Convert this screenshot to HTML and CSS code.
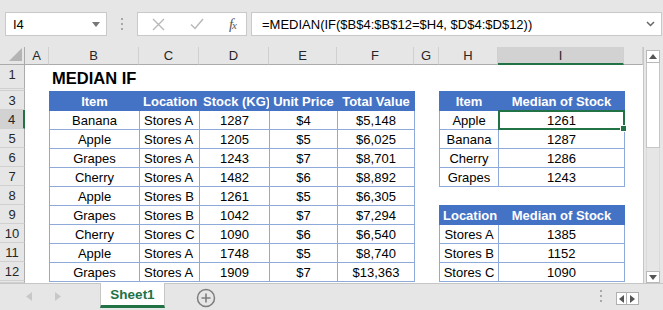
FILE: index.html
```html
<!DOCTYPE html>
<html lang="en">
<head>
    <meta charset="UTF-8">
    <meta name="viewport" content="width=device-width, initial-scale=1.0">
    <title>MEDIAN IF</title>
    <link rel="stylesheet" href="styles.css">
</head>
<body>
<div class="app">

    <!-- name box + formula bar -->
    <div class="formula-row">
        <div class="namebox">
            <span>I4</span>
            <svg class="caret" width="8" height="5" viewBox="0 0 8 5"><path d="M0 0h8L4 5z" fill="#777"/></svg>
        </div>
        <div class="grip"><i></i><i></i><i></i></div>
        <div class="fx-box">
            <svg width="13" height="13" viewBox="0 0 13 13"><path d="M1 1L12 12M12 1L1 12" stroke="#b8b8b8" stroke-width="1.4" fill="none"/></svg>
            <svg width="14" height="12" viewBox="0 0 14 12"><path d="M1 6.5L5 10.5L13 1" stroke="#b8b8b8" stroke-width="1.5" fill="none"/></svg>
            <span class="fx">f<small>x</small></span>
        </div>
        <div class="formula">
            <span>=MEDIAN(IF($B$4:$B$12=$H4, $D$4:$D$12))</span>
            <svg width="9" height="6" viewBox="0 0 9 6"><path d="M1 1L4.5 4.5L8 1" stroke="#666" stroke-width="1.5" fill="none"/></svg>
        </div>
    </div>

    <div class="workarea">
        <div class="sheet">
            <div class="corner"><svg width="13" height="13" viewBox="0 0 13 13"><path d="M13 0V13H0z" fill="#b4b4b4"/></svg></div>
            <div class="ch">A</div>
            <div class="ch">B</div>
            <div class="ch">C</div>
            <div class="ch">D</div>
            <div class="ch">E</div>
            <div class="ch">F</div>
            <div class="ch">G</div>
            <div class="ch">H</div>
            <div class="ch sel">I</div>
            <div class="ch"></div>

            <div class="rh">1</div>
            <div class="rh small"></div>
            <div class="rh">3</div>
            <div class="rh sel">4</div>
            <div class="rh">5</div>
            <div class="rh">6</div>
            <div class="rh">7</div>
            <div class="rh">8</div>
            <div class="rh">9</div>
            <div class="rh">10</div>
            <div class="rh">11</div>
            <div class="rh">12</div>
            <div class="rh small"></div>

            <div class="title">MEDIAN IF</div>

            <table class="xl stock">
                <colgroup><col style="width:90px"><col style="width:60px"><col style="width:70px"><col style="width:68px"><col style="width:77px"></colgroup>
                <tr><th>Item</th><th>Location</th><th>Stock (KG)</th><th>Unit Price</th><th>Total Value</th></tr>
                <tr><td>Banana</td><td class="l">Stores A</td><td>1287</td><td>$4</td><td>$5,148</td></tr>
                <tr><td>Apple</td><td class="l">Stores A</td><td>1205</td><td>$5</td><td>$6,025</td></tr>
                <tr><td>Grapes</td><td class="l">Stores A</td><td>1243</td><td>$7</td><td>$8,701</td></tr>
                <tr><td>Cherry</td><td class="l">Stores A</td><td>1482</td><td>$6</td><td>$8,892</td></tr>
                <tr><td>Apple</td><td class="l">Stores B</td><td>1261</td><td>$5</td><td>$6,305</td></tr>
                <tr><td>Grapes</td><td class="l">Stores B</td><td>1042</td><td>$7</td><td>$7,294</td></tr>
                <tr><td>Cherry</td><td class="l">Stores C</td><td>1090</td><td>$6</td><td>$6,540</td></tr>
                <tr><td>Apple</td><td class="l">Stores A</td><td>1748</td><td>$5</td><td>$8,740</td></tr>
                <tr><td>Grapes</td><td class="l">Stores A</td><td>1909</td><td>$7</td><td>$13,363</td></tr>
            </table>

            <table class="xl by-item">
                <colgroup><col style="width:59px"><col style="width:126px"></colgroup>
                <tr><th>Item</th><th>Median of Stock</th></tr>
                <tr><td>Apple</td><td class="active">1261</td></tr>
                <tr><td>Banana</td><td>1287</td></tr>
                <tr><td>Cherry</td><td>1286</td></tr>
                <tr><td>Grapes</td><td>1243</td></tr>
            </table>

            <table class="xl by-location">
                <colgroup><col style="width:59px"><col style="width:126px"></colgroup>
                <tr><th>Location</th><th>Median of Stock</th></tr>
                <tr><td>Stores A</td><td>1385</td></tr>
                <tr><td>Stores B</td><td>1152</td></tr>
                <tr><td>Stores C</td><td>1090</td></tr>
            </table>
        </div>

        <div class="vscroll">
            <div class="vbtn"><svg width="8" height="5" viewBox="0 0 8 5"><path d="M0 5h8L4 0z" fill="#555"/></svg></div>
            <div class="thumb"></div>
            <div class="track"></div>
            <div class="vbtn down"><svg width="8" height="5" viewBox="0 0 8 5"><path d="M0 0h8L4 5z" fill="#555"/></svg></div>
        </div>
    </div>

    <div class="tabbar">
        <div class="tabnav">
            <svg width="6" height="9" viewBox="0 0 6 9"><path d="M6 0V9L0 4.5z" fill="#c8c8c8"/></svg>
            <svg width="6" height="9" viewBox="0 0 6 9"><path d="M0 0V9L6 4.5z" fill="#c8c8c8"/></svg>
        </div>
        <div class="tab">Sheet1</div>
        <div class="addsheet">
            <svg width="20" height="20" viewBox="0 0 20 20"><circle cx="10" cy="10" r="8.5" stroke="#7d7d7d" stroke-width="1.5" fill="none"/><path d="M10 5.5v9M5.5 10h9" stroke="#7d7d7d" stroke-width="1.6"/></svg>
        </div>
        <div class="spacer"></div>
        <div class="grip low"><i></i><i></i><i></i></div>
        <div class="hnav">
            <span><svg width="5" height="8" viewBox="0 0 5 8"><path d="M5 0V8L0 4z" fill="#555"/></svg></span>
            <span><svg width="5" height="8" viewBox="0 0 5 8"><path d="M0 0V8L5 4z" fill="#555"/></svg></span>
        </div>
    </div>

</div>
</body>
</html>
```

FILE: styles.css
```css
body {
    margin: 0;
    font-family: "Liberation Sans", Arial, sans-serif;
    font-size: 13px;
    color: #000;
    background: #e6e6e6;
}
.app {
    width: 663px;
    height: 310px;
    overflow: hidden;
    display: flex;
    flex-direction: column;
    background: #e6e6e6;
}

/* formula bar */
.formula-row {
    height: 47px;
    flex: none;
    display: flex;
    align-items: flex-start;
    padding: 12px 1px 0 5px;
    box-sizing: border-box;
}
.namebox,
.fx-box,
.formula {
    height: 24px;
    box-sizing: border-box;
    background: #fff;
    border: 1px solid #c9c9c9;
    display: flex;
    align-items: center;
}
.namebox {
    width: 102px;
    padding: 0 6px 0 7px;
    justify-content: space-between;
}
.grip {
    width: 2px;
    margin: 6px 14px 0 14px;
    display: flex;
    flex-direction: column;
    gap: 3px;
}
.grip i {
    display: block;
    width: 2px;
    height: 2px;
    background: #a8a8a8;
}
.fx-box {
    width: 110px;
    padding: 0 10px 0 14px;
    justify-content: space-between;
}
.fx {
    font-family: "Liberation Serif", "Times New Roman", serif;
    font-style: italic;
    font-size: 15px;
    color: #5a5a5a;
    letter-spacing: -1px;
}
.fx small {
    font-size: 11px;
}
.formula {
    flex: 1;
    margin-left: 4px;
    padding: 0 6px 0 10px;
    justify-content: space-between;
}

/* sheet */
.workarea {
    height: 236px;
    flex: none;
    display: flex;
}
.sheet {
    width: 644px;
    box-sizing: border-box;
    border-right: 1px solid #c6c6c6;
    background: #fff;
    display: grid;
    grid-template-columns: 25px 24px 90px 60px 70px 68px 77px 25px 59px 126px 1fr;
    grid-template-rows: 18px 24px 2px repeat(10, 19px) 1fr;
    overflow: hidden;
}
.corner {
    background: #e6e6e6;
    border-right: 1px solid #ababab;
    border-bottom: 1px solid #ababab;
    display: flex;
    align-items: flex-end;
    justify-content: flex-end;
    padding: 0 2px 3px 0;
}
.ch {
    background: #e6e6e6;
    border-right: 1px solid #d0d0d0;
    border-bottom: 1px solid #ababab;
    text-align: center;
    line-height: 17px;
    color: #262626;
}
.ch.sel {
    background: #d2d2d2;
    border-bottom: 2px solid #217346;
}
.rh {
    grid-column: 1;
    background: #e6e6e6;
    border-right: 1px solid #ababab;
    border-bottom: 1px solid #d0d0d0;
    text-align: center;
    line-height: 19px;
    color: #262626;
    overflow: hidden;
}
.rh:first-of-type {
    line-height: 24px;
}
.rh.sel {
    background: #d2d2d2;
    border-right: 2px solid #217346;
}
.title {
    grid-column: 3 / 8;
    grid-row: 2;
    align-self: end;
    padding-left: 3px;
    font-size: 16.5px;
    font-weight: bold;
    line-height: 22px;
}

/* tables */
.xl {
    border-collapse: collapse;
    table-layout: fixed;
    width: 100%;
    align-self: start;
}
.stock {
    grid-column: 3 / 8;
    grid-row: 4 / 14;
}
.by-item {
    grid-column: 9 / 11;
    grid-row: 4 / 9;
}
.by-location {
    grid-column: 9 / 11;
    grid-row: 10 / 14;
}
.xl tr {
    height: 19px;
}
.xl th,
.xl td {
    padding: 0 3px;
    line-height: 17px;
    white-space: nowrap;
    overflow: hidden;
    text-align: center;
}
.xl th {
    background: #4472c4;
    color: #fff;
    font-weight: bold;
    border: 1px solid #4472c4;
}
.stock th + th {
    border-left-color: #8eaadb;
}
.xl td {
    border: 1px solid #8eaadb;
}
.xl td.l {
    text-align: left;
    padding-left: 4px;
}
.xl td.active {
    position: relative;
    overflow: visible;
}
.xl td.active::after {
    content: "";
    position: absolute;
    left: -1px;
    top: -1px;
    right: -1px;
    bottom: -1px;
    border: 2px solid #217346;
}
.xl td.active::before {
    content: "";
    position: absolute;
    right: -3px;
    bottom: -3px;
    width: 5px;
    height: 5px;
    background: #217346;
    border: 1px solid #fff;
    z-index: 1;
}

/* vertical scrollbar */
.vscroll {
    width: 14px;
    margin: 3px 3px 0 2px;
    display: flex;
    flex-direction: column;
}
.vbtn {
    height: 13px;
    box-sizing: border-box;
    background: #fff;
    border: 1px solid #b9b9b9;
    display: flex;
    align-items: center;
    justify-content: center;
}
.vbtn.down {
    height: 12px;
}
.thumb {
    height: 85px;
    box-sizing: border-box;
    background: #fff;
    border: 1px solid #c6c6c6;
    border-top: none;
}
.track {
    flex: 1;
    background: #e6e6e6;
    border-left: 1px solid #dadada;
    border-right: 1px solid #dadada;
}

/* sheet tabs */
.tabbar {
    flex: 1;
    display: flex;
    align-items: flex-start;
    border-top: 1px solid #c6c6c6;
}
.tabnav {
    width: 100px;
    height: 25px;
    display: flex;
    align-items: center;
    gap: 23px;
    padding-left: 26px;
    box-sizing: border-box;
}
.tab {
    width: 65px;
    height: 25px;
    margin-top: -1px;
    box-sizing: border-box;
    background: #fff;
    border-left: 1px solid #c6c6c6;
    border-right: 1px solid #c6c6c6;
    border-bottom: 3px solid #217346;
    color: #217346;
    font-weight: bold;
    font-size: 13.5px;
    text-align: center;
    line-height: 23px;
}
.addsheet {
    margin: 4px 0 0 31px;
    height: 20px;
}
.spacer {
    flex: 1;
}
.grip.low {
    margin: 6px 14px 0 0;
}
.hnav {
    margin: 8px 24px 0 0;
    display: flex;
}
.hnav span {
    width: 11px;
    height: 13px;
    box-sizing: border-box;
    background: #fff;
    border: 1px solid #b0b0b0;
    display: flex;
    align-items: center;
    justify-content: center;
}
.hnav span + span {
    border-left: none;
    width: 12px;
}
```
